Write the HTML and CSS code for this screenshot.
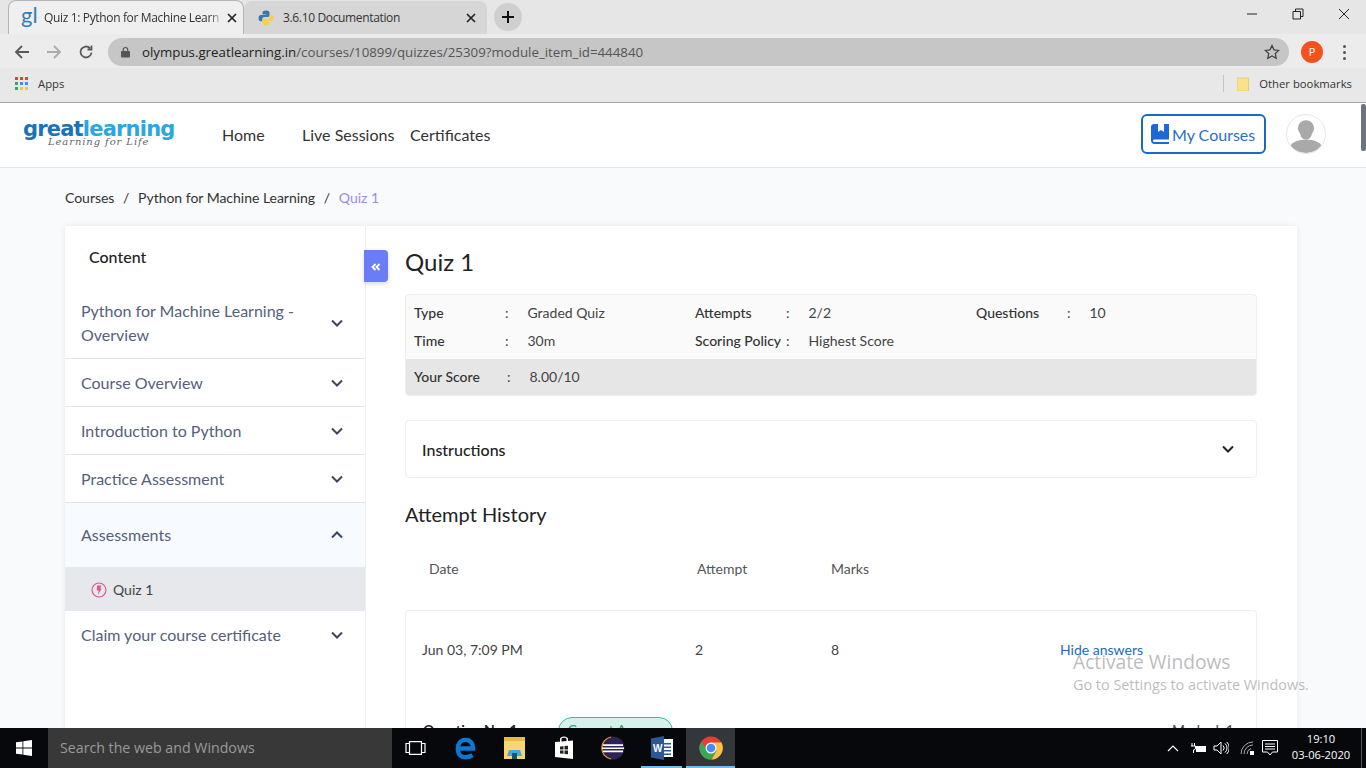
FILE: index.html
```html
<!DOCTYPE html>
<html lang="en">
<head>
  <meta charset="UTF-8" />
  <title>Quiz 1: Python for Machine Learning</title>
  <link rel="stylesheet" href="styles.css">
</head>
<body>

<div class="tabstrip">
  <div class="tab tab-active">
    <span class="favicon-gl">gl</span>
    <span class="tab-title">Quiz 1: Python for Machine Learn</span>
    <svg class="tab-close" viewBox="0 0 10 10"><path d="M1 1l8 8M9 1l-8 8"/></svg>
  </div>
  <div class="tab tab-other">
    <svg class="favicon-py" viewBox="0 0 16 16">
      <path fill="#3c77a9" d="M8 0.5c-3 0-3.5 1.2-3.5 2.4V4.500h3.700v.6H3C1.500 5.100.5 6.200.5 8.200s1 3 2.300 3H4.300V9.300c0-1.300 1-2.200 2.200-2.200h3.200c1 0 1.800-.8 1.800-1.800V2.800C11.500 1.300 10 .5 8 .5z"/>
      <path fill="#f7cf4a" d="M8 15.500c3 0 3.500-1.200 3.500-2.400v-1.600H7.800v-.6H13c1.500 0 2.500-1.100 2.500-3.100s-1-3-2.300-3h-1.500v1.900c0 1.300-1 2.200-2.200 2.200H6.300c-1 0-1.800.8-1.800 1.800v2.500c0 1.500 1.500 2.300 3.500 2.300z"/>
    </svg>
    <span class="tab-title">3.6.10 Documentation</span>
    <svg class="tab-close" viewBox="0 0 10 10"><path d="M1 1l8 8M9 1l-8 8"/></svg>
  </div>
  <div class="new-tab">
    <svg viewBox="0 0 12 12"><path d="M6 0v12M0 6h12"/></svg>
  </div>
  <div class="window-btns">
    <svg viewBox="0 0 12 12"><path d="M1 6h10"/></svg>
    <svg viewBox="0 0 12 12"><path d="M1 3.500h7.500v7.500H1zM3.500 3.500V1H11v7.500H8.500"/></svg>
    <svg viewBox="0 0 12 12"><path d="M1 1l10 10M11 1L1 11"/></svg>
  </div>
</div>

<div class="toolbar">
  <svg class="nav-icon" viewBox="0 0 16 16"><path d="M15 8H2M8 2L2 8l6 6"/></svg>
  <svg class="nav-icon nav-off" viewBox="0 0 16 16"><path d="M1 8h13M8 2l6 6-6 6"/></svg>
  <svg class="nav-icon" viewBox="0 0 16 16"><path d="M13.500 8.500A5.500 5.500 0 1 1 12 4.200M13.500 1.500v4h-4"/></svg>
  <div class="omnibox">
    <svg class="lock" viewBox="0 0 10 12"><path d="M2.500 5V3.500a2.500 2.500 0 0 1 5 0V5" fill="none" stroke="#555" stroke-width="1.300"/><rect y="5" width="10" height="7" rx="1" fill="#555"/></svg>
    <span class="url"><b>olympus.greatlearning.in</b>/courses/10899/quizzes/25309?module_item_id=444840</span>
    <svg class="star" viewBox="0 0 16 16"><path d="M8 1.500l2 4.300 4.700.6-3.400 3.200.9 4.700L8 12l-4.200 2.300.9-4.700L1.300 6.400 6 5.800z"/></svg>
  </div>
  <span class="profile">P</span>
  <div class="kebab"><i></i><i></i><i></i></div>
</div>

<div class="bookmarks">
  <div class="apps-grid">
    <i class="c-red"></i><i class="c-red"></i><i class="c-red"></i>
    <i class="c-green"></i><i class="c-blue"></i><i class="c-blue"></i>
    <i class="c-green"></i><i class="c-yellow"></i><i class="c-yellow"></i>
  </div>
  <span class="apps-label">Apps</span>
  <span class="bm-sep"></span>
  <svg class="bm-folder" viewBox="0 0 12 14"><path d="M0 1h11.500v13H0z" fill="#fbe18c" stroke="#e8c65a" stroke-width=".8"/></svg>
  <span class="bm-other">Other bookmarks</span>
</div>

<div class="app">
  <header class="site-header">
    <div class="logo">
      <div class="logo-name"><span class="logo-great">great</span><span class="logo-learning">learning</span></div>
      <div class="logo-tag">Learning for Life</div>
    </div>
    <nav class="site-nav">
      <a class="nav-home">Home</a>
      <a class="nav-live">Live Sessions</a>
      <a>Certificates</a>
    </nav>
    <a class="my-courses">
      <svg viewBox="0 0 18 20"><path fill="#1c69d4" d="M3 0h15v15.500H3.500c-1 0-1.500.5-1.500 1.200S2.500 18 3.500 18H18v2H3.500C1.500 20 0 18.500 0 16.500V3C0 1.300 1.300 0 3 0z"/><path fill="#fff" d="M7 0h6v8l-3-2-3 2z"/></svg>
      My Courses
    </a>
    <div class="avatar">
      <svg viewBox="0 0 40 40"><circle cx="20" cy="14" r="8.500" fill="#a9a9a9"/><ellipse cx="20" cy="20" rx="6" ry="6" fill="#a9a9a9"/><path fill="#a9a9a9" d="M3 33c3-5 9-7 17-7s14 2 17 7c-4 4.500-10 7-17 7S7 37.500 3 33z"/></svg>
    </div>
  </header>

  <div class="breadcrumb">
    <span>Courses</span><span class="bc-sep">/</span>
    <span>Python for Machine Learning</span><span class="bc-sep">/</span>
    <span class="bc-current">Quiz 1</span>
  </div>

  <div class="course-card">
    <aside class="sidebar">
      <div class="sidebar-title">Content</div>
      <div class="module module-tall">
        <span>Python for Machine Learning - Overview</span>
        <svg class="chev" viewBox="0 0 12 8"><path d="M1 1.500l5 5 5-5"/></svg>
      </div>
      <div class="module">
        <span>Course Overview</span>
        <svg class="chev" viewBox="0 0 12 8"><path d="M1 1.500l5 5 5-5"/></svg>
      </div>
      <div class="module">
        <span>Introduction to Python</span>
        <svg class="chev" viewBox="0 0 12 8"><path d="M1 1.500l5 5 5-5"/></svg>
      </div>
      <div class="module">
        <span>Practice Assessment</span>
        <svg class="chev" viewBox="0 0 12 8"><path d="M1 1.500l5 5 5-5"/></svg>
      </div>
      <div class="module module-open">
        <span>Assessments</span>
        <svg class="chev" viewBox="0 0 12 8"><path d="M1 6.500l5-5 5 5"/></svg>
      </div>
      <div class="module-item">
        <svg viewBox="0 0 16 16"><circle cx="8" cy="8" r="7" fill="none" stroke="#e0558f" stroke-width="1.200"/><path fill="#e0558f" d="M6 3.500h4.500L9.200 6.500h1.600L7 12.800l.7-4.300H5.800z"/></svg>
        <span>Quiz 1</span>
      </div>
      <div class="module module-last">
        <span>Claim your course certificate</span>
        <svg class="chev" viewBox="0 0 12 8"><path d="M1 1.500l5 5 5-5"/></svg>
      </div>
    </aside>

    <button class="collapse-btn">
      <svg viewBox="0 0 10 8"><path d="M4.500 1L1.500 4l3 3M8.500 1l-3 3 3 3"/></svg>
    </button>

    <main class="quiz">
      <h1>Quiz 1</h1>

      <div class="info-box">
        <div class="info-grid">
          <div class="info"><span class="info-label">Type</span><span class="info-colon">:</span><span>Graded Quiz</span></div>
          <div class="info"><span class="info-label">Attempts</span><span class="info-colon">:</span><span>2/2</span></div>
          <div class="info"><span class="info-label">Questions</span><span class="info-colon">:</span><span>10</span></div>
          <div class="info"><span class="info-label">Time</span><span class="info-colon">:</span><span>30m</span></div>
          <div class="info"><span class="info-label">Scoring Policy</span><span class="info-colon">:</span><span>Highest Score</span></div>
        </div>
        <div class="score-row">
          <span class="info-label">Your Score</span><span class="info-colon">:</span><span>8.00/10</span>
        </div>
      </div>

      <div class="instructions">
        <span>Instructions</span>
        <svg class="chev chev-dark" viewBox="0 0 12 8"><path d="M1 1.500l5 5 5-5"/></svg>
      </div>

      <h2>Attempt History</h2>

      <div class="attempt-head">
        <span class="col-date">Date</span>
        <span class="col-attempt">Attempt</span>
        <span>Marks</span>
      </div>

      <div class="attempt-card">
        <div class="attempt-row">
          <span class="col-date">Jun 03, 7:09 PM</span>
          <span class="col-attempt">2</span>
          <span class="col-marks">8</span>
          <a class="hide-link">Hide answers</a>
        </div>
        <div class="question-row">
          <span class="question-no">Question No. 1</span>
          <span class="answer-pill">Correct Answer</span>
          <span class="question-marks">Marked: 1</span>
        </div>
      </div>
    </main>
  </div>

  <div class="scroll-thumb"></div>
  <div class="watermark">
    <div class="wm-title">Activate Windows</div>
    <div class="wm-sub">Go to Settings to activate Windows.</div>
  </div>
</div>

<footer class="taskbar">
  <div class="start">
    <svg viewBox="0 0 16 16"><path fill="#fff" d="M0 2.300l6.500-.9v6.200H0zM7.300 1.300L16 0v7.600H7.300zM0 8.400h6.500v6.200L0 13.700zM7.300 8.400H16V16l-8.700-1.200z"/></svg>
  </div>
  <div class="search">Search the web and Windows</div>
  <div class="task-icons">
    <div class="task-icon">
      <svg class="task-view" viewBox="0 0 21 14"><path fill="none" stroke="#fff" stroke-width="1.200" d="M4.500 .6h12v12.800h-12zM4.500 2.500H1v9h3.500M16.500 2.500H20v9h-3.500"/></svg>
    </div>
    <div class="task-icon">
      <svg viewBox="0 0 20 22"><path fill="none" stroke="#0b78d4" stroke-width="4" d="M3 11.500h13.500c0-5-2.500-8-7-8S2.500 7 2.500 12c0 5 3 7.500 7 7.500 2.500 0 4.500-.7 6.500-2"/></svg>
    </div>
    <div class="task-icon">
      <svg viewBox="0 0 22 24"><path fill="#f7d774" d="M0 1h21v22H0z"/><path fill="#e9b949" d="M0 1h21v4H0z"/><path fill="#3fa9e0" d="M5 14h11l2 6H3z"/><path fill="#1f4e79" d="M8 17h5v6H8z"/></svg>
    </div>
    <div class="task-icon">
      <svg viewBox="0 0 20 24"><path fill="#fff" d="M1 6l18-1.500V23L1 21zM6 6V3c0-3.500 8-3.500 8 0v2h-1.500V3c0-1.800-5-1.800-5 0v3z"/><path fill="#222" d="M6 10.500l3.500-.3v3.300H6zM10.500 10.100l3.500-.3v3.700h-3.500zM6 14.500h3.500v3.300L6 17.500zM10.500 14.500H14v3.700l-3.500-.3z"/></svg>
    </div>
    <div class="task-icon">
      <svg viewBox="0 0 24 24"><circle cx="12" cy="12" r="11.500" fill="#2c2255"/><path fill="none" stroke="#f7941e" stroke-width="1.200" d="M10 1C4.500 2 .8 6.500.8 12s3.700 10 9.200 11"/><path fill="#fff" d="M2 8.200h20v1.700H2zM1 11.400h22v1.700H1zM2 14.600h20v1.700H2z"/></svg>
    </div>
    <div class="task-icon">
      <svg viewBox="0 0 22 24"><path fill="#fff" d="M9 3h13v18H9z"/><path fill="#2b5797" d="M11 7h9v1.500h-9zM11 10.500h9V12h-9zM11 14h9v1.500h-9zM11 17.500h9V19h-9z"/><path fill="#2b5797" d="M0 2.500L13 0v24L0 21.500z"/><text x="2" y="16" class="word-w">W</text></svg>
      <i class="task-active"></i>
    </div>
    <div class="task-icon task-icon-on">
      <svg viewBox="0 0 24 24"><circle cx="12" cy="12" r="11.500" fill="#e44134"/><path fill="#f6c344" d="M12 6.500h10.500a11.500 11.500 0 0 1-10 17l5-9z"/><path fill="#3aa757" d="M2 6.200a11.500 11.500 0 0 0 10.500 17.300l5-9-5.500 3z"/><circle cx="12" cy="12" r="5.500" fill="#fff"/><circle cx="12" cy="12" r="4.300" fill="#4a8af4"/></svg>
      <i class="task-active"></i>
    </div>
  </div>
  <div class="tray">
    <svg class="tray-up" viewBox="0 0 12 7"><path d="M1 6l5-5 5 5"/></svg>
    <svg class="tray-power" viewBox="0 0 16 11"><path d="M5 3h10v6H5z" fill="#fff"/><path d="M1 0v3M3.500 0v3M0 3h4.500v2a2 2 0 0 1-2 2v3" fill="none" stroke="#fff"/></svg>
    <svg class="tray-volume" viewBox="0 0 16 14"><path d="M1 5h3l4-4v12L4 9H1zM10 4.500a3.500 3.500 0 0 1 0 5M12 2.500a6 6 0 0 1 0 9M13.800 1a8.500 8.500 0 0 1 0 12" fill="none" stroke="#fff"/></svg>
    <svg class="tray-wifi" viewBox="0 0 14 14"><path d="M1 13A12 12 0 0 1 13 1M4 13a9 9 0 0 1 9-9M7 13a6 6 0 0 1 4-5.500" fill="none" stroke="#aaa"/><path d="M10 10h4v4h-4z" fill="#fff"/></svg>
    <svg class="tray-note" viewBox="0 0 16 16"><path d="M.5 .5h15v11.500h-5L8 15l-2.500-3H.5zM3 4h10M3 6.500h10M3 9h10" fill="none" stroke="#fff"/></svg>
    <div class="clock"><div>19:10</div><div>03-06-2020</div></div>
    <span class="show-desktop"></span>
  </div>
</footer>

</body>
</html>
```

FILE: styles.css
```css
* {
  box-sizing: border-box;
}

html, body {
  height: 768px;
  margin: 0;
  overflow: hidden;
}

body {
  display: flex;
  flex-direction: column;
  font-family: 'Lato', sans-serif;
  background: #fff;
}

/* browser chrome */
.tabstrip {
  height: 34px;
  display: flex;
  align-items: flex-end;
  padding-left: 8px;
  background: #e6e6e6;
  font-family: 'Open Sans', sans-serif;
  font-size: 12px;
  letter-spacing: -.35px;
  color: #333;
}

.tab {
  width: 236px;
  height: 34px;
  display: flex;
  align-items: center;
  padding: 0 6px 0 12px;
  border-radius: 8px 8px 0 0;
}

.tab-active {
  background: #efefef;
  border: 1px solid #b5b5b5;
  border-bottom: 0;
}

.tab-other {
  background: #d6d6d6;
  width: 243px;
  height: 33px;
  padding: 0 11px 0 14px;
}

.favicon-gl {
  width: 20px;
  font-family: 'Lato', sans-serif;
  font-size: 22px;
  line-height: 20px;
  margin-top: -6px;
  letter-spacing: 0;
  color: #2f7fb5;
}

.favicon-py {
  width: 16px;
  height: 16px;
}

.tab-title {
  flex: 1;
  margin-left: 3px;
  white-space: nowrap;
  -webkit-mask-image: linear-gradient(to left, transparent 3px, #000 18px);
  mask-image: linear-gradient(to left, transparent 3px, #000 18px);
}

.tab-other .tab-title {
  margin-left: 9px;
  -webkit-mask-image: none;
  mask-image: none;
}

.tab-close {
  width: 10px;
  height: 10px;
  fill: none;
  stroke: #222;
  stroke-width: 1.700;
}

.new-tab {
  width: 28px;
  height: 28px;
  margin: 0 0 3px 7px;
  border-radius: 50%;
  background: #cfcfcf;
  display: flex;
  align-items: center;
  justify-content: center;
}

.new-tab svg {
  width: 12px;
  height: 12px;
  fill: none;
  stroke: #111;
  stroke-width: 2;
}

.window-btns {
  margin-left: auto;
  align-self: flex-start;
  padding: 8px 16px 0 0;
  display: flex;
  gap: 34px;
}

.window-btns svg {
  width: 12px;
  height: 12px;
  fill: none;
  stroke: #222;
  stroke-width: 1;
}

.toolbar {
  height: 34px;
  display: flex;
  align-items: center;
  padding: 2px 20px 0 14px;
  background: #ececec;
}

.nav-icon {
  width: 16px;
  height: 16px;
  margin-right: 16px;
  fill: none;
  stroke: #5a5a5a;
  stroke-width: 1.800;
}

.nav-off {
  stroke: #ababab;
}

.omnibox {
  width: 1182px;
  height: 28px;
  margin-left: -2px;
  display: flex;
  align-items: center;
  padding: 0 9px 0 13px;
  border-radius: 14px;
  background: #c6c6c6;
  font-family: 'Open Sans', sans-serif;
  font-size: 13.300px;
  color: #555;
}

.lock {
  width: 9px;
  height: 12px;
}

.url {
  margin-left: 12px;
}

.url b {
  font-weight: 400;
  color: #222;
}

.star {
  width: 16px;
  height: 16px;
  margin-left: auto;
  fill: none;
  stroke: #444;
  stroke-width: 1.300;
}

.profile {
  width: 22px;
  height: 22px;
  margin-left: 12px;
  border-radius: 50%;
  background: #f4511e;
  color: #fff;
  font-family: 'Open Sans', sans-serif;
  font-size: 11px;
  line-height: 22px;
  text-align: center;
}

.kebab {
  margin-left: 20px;
  display: flex;
  flex-direction: column;
  gap: 3px;
}

.kebab i {
  width: 3px;
  height: 3px;
  border-radius: 50%;
  background: #555;
}

.bookmarks {
  height: 35px;
  display: flex;
  align-items: center;
  padding: 0 14px 3px 15px;
  background: #e8e8e8;
  border-bottom: 1px solid #a6a6a6;
  font-family: 'Open Sans', sans-serif;
  font-size: 11.300px;
  color: #333;
}

.apps-grid {
  width: 13px;
  height: 13px;
  display: grid;
  grid-template-columns: repeat(3, 3px);
  grid-auto-rows: 3px;
  gap: 2px;
}

.c-red { background: #e0452f; }
.c-green { background: #3aa757; }
.c-blue { background: #4a8af4; }
.c-yellow { background: #f6c344; }

.apps-label {
  margin-left: 10px;
}

.bm-sep {
  width: 1px;
  height: 17px;
  margin-left: auto;
  background: #c4c4c4;
}

.bm-folder {
  width: 12px;
  height: 14px;
  margin: 0 10px 0 13px;
}

/* page */
.app {
  position: relative;
  flex: 1;
  min-height: 0;
  overflow: hidden;
  background: #f9fafb;
}

.site-header {
  height: 65px;
  display: flex;
  align-items: center;
  padding: 0 40px 2px 23px;
  background: #fff;
  border-bottom: 1px solid #e4e4e4;
}

.logo {
  width: 199px;
  margin-top: -3px;
}

.logo-name {
  font-family: 'DejaVu Sans', sans-serif;
  font-weight: 700;
  font-size: 21px;
  line-height: 18px;
  letter-spacing: -.8px;
}

.logo-great {
  color: #1b72b5;
}

.logo-learning {
  color: #2ca6e0;
}

.logo-tag {
  margin-left: 25px;
  font-family: 'DejaVu Serif', serif;
  font-style: italic;
  font-size: 10px;
  line-height: 8px;
  letter-spacing: .9px;
  color: #666;
}

.site-nav {
  display: flex;
  font-size: 16px;
  color: #333;
}

.nav-home {
  width: 80px;
}

.nav-live {
  width: 108px;
}

.my-courses {
  width: 125px;
  height: 40px;
  margin-left: auto;
  display: flex;
  align-items: center;
  gap: 3px;
  padding-left: 8px;
  border: 2px solid #1c69c4;
  border-radius: 6px;
  font-size: 16px;
  color: #2a6fc9;
}

.my-courses svg {
  width: 18px;
  height: 20px;
}

.avatar {
  width: 40px;
  height: 40px;
  margin-left: 20px;
  border-radius: 50%;
  border: 1px solid #e6e6e6;
  overflow: hidden;
  background: #fff;
}

.avatar svg {
  display: block;
  width: 38px;
  height: 38px;
}

.breadcrumb {
  height: 58px;
  display: flex;
  align-items: center;
  padding-left: 65px;
  font-size: 14px;
  letter-spacing: -.02px;
  color: #333;
}

.bc-sep {
  margin: 0 8.700px;
}

.bc-current {
  color: #9b8ce8;
}

.course-card {
  position: relative;
  height: 640px;
  margin: 0 69px 0 65px;
  display: flex;
  background: #fff;
  box-shadow: 0 0 6px rgba(0,0,0,0.08);
}

.sidebar {
  width: 301px;
  flex: none;
  border-right: 1px solid #eee;
  font-size: 16px;
  color: #56607a;
}

.sidebar-title {
  height: 68px;
  padding: 21px 24px 0;
  font-size: 16px;
  font-weight: 500;
  color: #222;
}

.module {
  height: 48px;
  display: flex;
  align-items: center;
  justify-content: space-between;
  padding: 0 22px 0 16px;
  border-bottom: 1px solid #e4e4e4;
  line-height: 24px;
}

.module span {
  width: 225px;
}

.module-tall {
  height: 65px;
  padding-bottom: 6px;
}

.module-open {
  height: 64px;
  background: #f7faff;
  border-bottom: 0;
}

.module-last {
  border-bottom: 0;
}

.chev {
  width: 12px;
  height: 8px;
  fill: none;
  stroke: #3c4660;
  stroke-width: 2;
}

.chev-dark {
  stroke: #222;
}

.module-item {
  height: 44px;
  display: flex;
  align-items: center;
  gap: 6px;
  padding-left: 26px;
  background: #e6e8eb;
  font-size: 14px;
  color: #444;
}

.module-item svg {
  width: 16px;
  height: 16px;
  margin-top: 2px;
}

.collapse-btn {
  position: absolute;
  left: 299px;
  top: 24px;
  width: 24px;
  height: 32px;
  padding: 0;
  border: 0;
  border-radius: 0 4px 4px 0;
  background: #6a7cf6;
  box-shadow: 0 2px 5px rgba(0,0,0,0.15);
}

.collapse-btn svg {
  width: 10px;
  height: 8px;
  fill: none;
  stroke: #fff;
  stroke-width: 1.800;
}

.quiz {
  width: 852px;
  margin-left: 39px;
  font-size: 14px;
  color: #444;
}

.quiz h1 {
  margin: 19px 0 16px;
  font-size: 24px;
  line-height: 33px;
  font-weight: 400;
  color: #222;
}

.info-box {
  height: 102px;
  background: #fafafa;
  border: 1px solid #eee;
  border-radius: 4px;
  overflow: hidden;
}

.info-grid {
  height: 64px;
  padding: 3px 0 0 8px;
  display: grid;
  grid-template-columns: repeat(3, 281px);
  grid-auto-rows: 28px;
}

.info {
  display: flex;
  align-items: center;
}

.info-label {
  width: 91px;
  font-weight: 500;
  color: #333;
  white-space: nowrap;
}

.info-colon {
  width: 22.500px;
}

.score-row {
  height: 37px;
  display: flex;
  align-items: center;
  padding: 0 0 2px 8px;
  background: #e6e6e6;
}

.score-row .info-label {
  width: 93px;
}

.instructions {
  height: 58px;
  margin-top: 24px;
  display: flex;
  align-items: center;
  justify-content: space-between;
  padding: 0 22px 0 16px;
  background: #fff;
  border: 1px solid #eee;
  border-radius: 4px;
  font-size: 16px;
  font-weight: 500;
  color: #222;
}

.quiz h2 {
  margin: 21px 0 0;
  font-size: 20px;
  line-height: 30px;
  font-weight: 400;
  color: #222;
}

.attempt-head {
  height: 81px;
  display: flex;
  align-items: center;
  padding: 0 0 3px 24px;
  color: #555;
}

.attempt-head .col-date {
  width: 268px;
}

.attempt-head .col-attempt {
  width: 134px;
}

.attempt-card {
  border: 1px solid #eee;
  border-bottom: 0;
  border-radius: 4px;
}

.attempt-row {
  height: 77px;
  display: flex;
  align-items: center;
  padding-left: 16px;
}

.attempt-row .col-date {
  width: 273px;
}

.attempt-row .col-attempt {
  width: 136px;
}

.col-marks {
  width: 229px;
}

.hide-link {
  color: #1c69c4;
}

.question-row {
  position: relative;
  display: flex;
  align-items: center;
  height: 30px;
  margin-top: 29px;
  padding-left: 17px;
  font-weight: 700;
  color: #222;
}

.question-no {
  width: 135px;
  margin-bottom: 6px;
}

.answer-pill {
  width: 115px;
  height: 30px;
  border: 1px solid #3fb8a0;
  border-radius: 14px;
  background: #d5f2ea;
  color: #2a9d80;
  line-height: 24px;
  text-align: center;
  font-weight: 400;
}

.question-marks {
  font-weight: 400;
  color: #444;
  margin-left: auto;
  margin-bottom: 6px;
  padding-right: 22px;
}

.scroll-thumb {
  position: absolute;
  top: 1px;
  right: 0;
  width: 5px;
  height: 47px;
  background: #6d7380;
  border-radius: 2px;
}

.watermark {
  position: absolute;
  left: 1073px;
  top: 546px;
  color: rgba(120,120,120,0.5);
  pointer-events: none;
}

.wm-title {
  font-family: 'Open Sans', sans-serif;
  font-size: 19.200px;
  line-height: 26px;
}

.wm-sub {
  font-family: 'Open Sans', sans-serif;
  font-size: 14.400px;
  line-height: 20px;
  white-space: nowrap;
}

/* windows taskbar */
.taskbar {
  height: 40px;
  display: flex;
  align-items: center;
  background: #06080c;
  color: #fff;
  font-family: 'Open Sans', sans-serif;
}

.start {
  width: 48px;
  display: flex;
  justify-content: center;
}

.start svg {
  width: 16px;
  height: 16px;
}

.search {
  width: 344px;
  height: 40px;
  padding-left: 12px;
  background: #383838;
  color: #9a9a9a;
  font-size: 14.200px;
  line-height: 40px;
}

.task-icons {
  display: flex;
}

.task-icon {
  position: relative;
  width: 49px;
  height: 40px;
  display: flex;
  align-items: center;
  justify-content: center;
}

.task-icon svg {
  width: 24px;
  height: 24px;
}

.task-icon .task-view {
  width: 21px;
  height: 14px;
  margin-left: -2px;
}

.task-icon-on {
  background: #33373b;
}

.word-w {
  font-family: 'Liberation Sans', sans-serif;
  font-size: 10px;
  font-weight: 700;
  fill: #fff;
}

.task-active {
  position: absolute;
  left: 4px;
  right: 4px;
  bottom: 0;
  height: 2px;
  background: #76b9ed;
}

.task-icon-on .task-active {
  left: 0;
  right: 0;
}

.tray {
  margin-left: auto;
  height: 40px;
  display: flex;
  align-items: center;
}

.tray-up {
  width: 12px;
  height: 7px;
  fill: none;
  stroke: #fff;
  stroke-width: 1.200;
}

.tray-power {
  width: 16px;
  height: 11px;
  margin-left: 12px;
}

.tray-volume {
  width: 16px;
  height: 14px;
  margin-left: 6px;
}

.tray-wifi {
  width: 14px;
  height: 14px;
  margin-left: 11px;
}

.tray-note {
  width: 16px;
  height: 16px;
  margin-left: 8px;
}

.clock {
  width: 70px;
  margin-left: 8px;
  padding-bottom: 2px;
  font-size: 11.200px;
  line-height: 16px;
  text-align: center;
}

.show-desktop {
  width: 1px;
  height: 40px;
  margin: 0 4px 0 5px;
  background: #555;
}
```
